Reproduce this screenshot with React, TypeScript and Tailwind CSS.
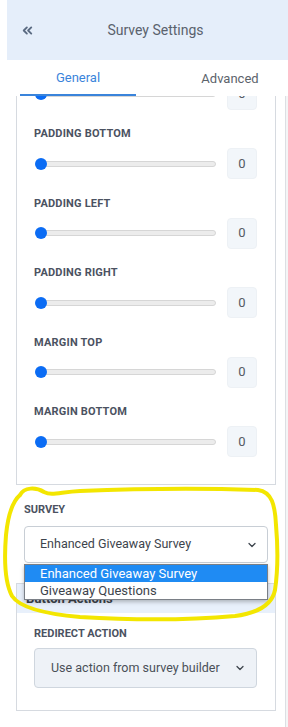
import React from 'react';
import { ChevronsLeft, ChevronDown } from 'lucide-react';

const spacingRows = ['Padding Top', 'Padding Bottom', 'Padding Left', 'Padding Right', 'Margin Top', 'Margin Bottom'];

const RangeRow = ({ label }: { label: string }) => (
  <div className="flex flex-col">
    <div className="h-4 leading-4 text-[11px] font-bold uppercase tracking-[0.2px] text-[#4b5261]">{label}</div>
    <div className="mt-[6px] flex h-[31px] items-center justify-between">
      <div className="relative ml-[2px] h-[6px] w-[180px] rounded-full border border-[#d6d6d6] bg-[#ececec]">
        <div className="absolute left-[-2px] top-1/2 h-3 w-3 -translate-y-1/2 rounded-full bg-[#0b6cf4]" />
      </div>
      <div className="flex h-[31px] w-[30px] items-center justify-center rounded-[4px] border border-[#edf1f5] bg-[#f2f6fa] text-[13px] text-[#555b63]">
        0
      </div>
    </div>
  </div>
);

export default function App() {
  return (
    <div
      className="relative flex h-[727px] w-[288px] overflow-hidden bg-white pl-[7px]"
      style={{ fontFamily: 'Roboto, "Liberation Sans", sans-serif' }}
    >
      <div className="flex min-w-0 flex-1 flex-col">
        {/* header */}
        <div className="flex h-[60px] shrink-0 items-center bg-[#e5eefa] pl-[13px] pr-[12px]">
          <ChevronsLeft size={15} strokeWidth={3} className="text-[#5b6b82]" />
          <div className="flex-1 text-center text-[14px] text-[#5a626d]">Survey Settings</div>
        </div>

        {/* tabs */}
        <div className="relative z-10 flex h-[36px] shrink-0 bg-white">
          <div className="ml-[13px] flex w-[116px] items-center justify-center border-b-2 border-[#3a84db] pt-[2px] text-[13px] text-[#3a84db]">
            General
          </div>
          <div className="flex flex-1 items-center justify-center pl-[36px] pt-[2px] text-[13px] text-[#5c636c]">
            Advanced
          </div>
        </div>

        {/* body */}
        <div className="flex min-h-0 flex-1">
          <div className="min-w-0 flex-1 overflow-hidden">
            <div className="mx-[9px] mt-[-56.5px] border border-[#d6dae0] pb-[27px] pl-[17px] pr-[18px] pt-4">
              <div className="flex flex-col gap-[16.5px]">
                {spacingRows.map((r) => (
                  <RangeRow key={r} label={r} />
                ))}
              </div>
            </div>

            <div className="px-[17px] pt-[17px]">
              <div className="h-4 leading-4 text-[11px] font-bold uppercase text-[#4b5261]">Survey</div>
              <div className="relative z-20 mt-[8px]">
                <div className="flex h-[37px] items-center justify-between rounded-[4px] border border-[#c8ced5] bg-white pl-[15px] pr-[9px] text-[12.5px] text-[#3d444c]">
                  <span>Enhanced Giveaway Survey</span>
                  <ChevronDown size={12} strokeWidth={2.5} className="text-[#3d444c]" />
                </div>
                <div className="absolute left-0 right-0 top-full mt-[1px] border border-[#7a7f86] bg-white text-[13px] shadow-[0_2px_4px_rgba(0,0,0,0.25)]">
                  <div className="flex h-[17px] items-center bg-[#1f8bf3] pl-[15px] text-white">Enhanced Giveaway Survey</div>
                  <div className="flex h-[17px] items-center pl-[15px] text-[#3d444c]">Giveaway Questions</div>
                </div>
              </div>
            </div>

            <div className="mx-[9px] mt-[20px] border border-[#d6dae0]">
              <div className="flex h-[29px] items-center bg-[#e8f0fb] px-[9px] text-[13px] font-bold text-[#3d444c]">
                Button Actions
              </div>
              <div className="pb-[22px] pl-[17px] pr-[18px] pt-[13px]">
                <div className="h-4 leading-4 text-[11px] font-bold uppercase text-[#4b5261]">Redirect Action</div>
                <div className="mt-[6px] flex h-[40px] items-center justify-between rounded-[4px] border border-[#cfd6de] bg-[#eef2f7] pl-[16px] pr-[10px] text-[12.5px] text-[#4a5058]">
                  <span>Use action from survey builder</span>
                  <ChevronDown size={12} strokeWidth={2.5} className="text-[#3d444c]" />
                </div>
              </div>
            </div>
          </div>
          {/* scrollbar */}
          <div className="w-[3px] shrink-0 border-l border-[#dcdfe3] bg-[#f4f5f6]" />
        </div>
      </div>

      {/* hand-drawn highlight annotation */}
      <svg
        className="pointer-events-none absolute left-0 top-0 z-30"
        width="288"
        height="727"
        viewBox="0 0 288 727"
        fill="none"
      >
        <path
          d="M 20 495 C 24 487, 36 487, 44 492 C 52 496, 60 492, 80 491 C 130 489, 200 488, 258 490 C 272 492, 275 505, 276 525 C 278 548, 278 570, 275 590 C 272 605, 258 613, 235 616 C 190 620, 130 620, 80 617 C 45 614, 20 608, 12 596 C 5 583, 4 560, 6 535 C 8 515, 12 502, 20 495"
          stroke="#f3e600"
          strokeWidth="4"
          strokeLinecap="round"
          strokeLinejoin="round"
        />
      </svg>
    </div>
  );
}
